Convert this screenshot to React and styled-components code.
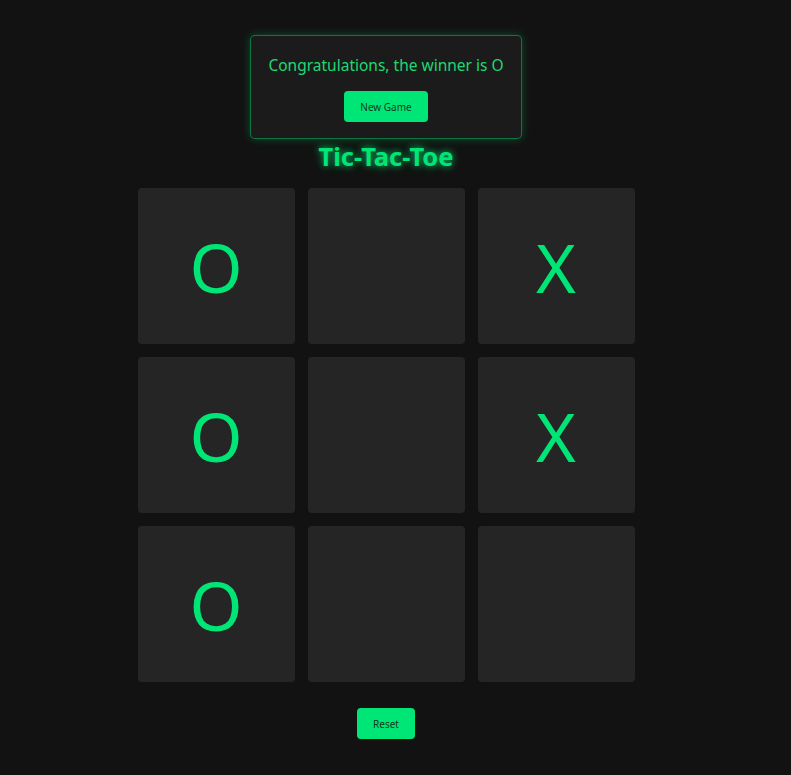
import React, { useState } from 'react';
import styled, { createGlobalStyle } from 'styled-components';

const GlobalStyle = createGlobalStyle`
    body {
        margin: 0;
        background: #121212;
        font-family: "Noto Sans", "Open Sans", sans-serif;
    }
`;

const Page = styled.div`
    min-height: 775px;
    padding: 35px 19px 0 0;
    box-sizing: border-box;

    display: flex;
    flex-direction: column;
    align-items: center;
`;

const Popup = styled.div`
    width: 272px;
    height: 104px;
    box-sizing: border-box;
    padding-top: 17px;

    background: #1b1b1b;
    border: 1px solid rgba(0, 230, 118, 0.45);
    border-radius: 5px;
    box-shadow: 0 0 8px rgba(0, 230, 118, 0.3);

    display: flex;
    flex-direction: column;
    align-items: center;
`;

const Message = styled.div`
    color: #1fd873;
    font-size: 15.5px;
    line-height: 24px;
`;

const Button = styled.button`
    width: ${props => props.w}px;
    height: 31px;
    margin-top: ${props => props.mt}px;

    background: #00e676;
    border: none;
    border-radius: 4px;

    color: #0f3a22;
    font-family: "Noto Sans", sans-serif;
    font-size: 10px;
    cursor: pointer;
`;

const Title = styled.h1`
    margin: 2px 0 17px;
    height: 30px;
    line-height: 30px;

    color: #00e676;
    font-size: 25.5px;
    font-weight: 700;
    text-shadow: 0 0 6px rgba(0, 230, 118, 0.7), 0 0 12px rgba(0, 230, 118, 0.4);
`;

const Board = styled.div`
    display: grid;
    grid-template-columns: repeat(3, 157px);
    grid-template-rows: repeat(3, 156px);
    gap: 13px;
`;

const Cell = styled.div`
    background: #252525;
    border-radius: 4px;

    display: flex;
    justify-content: center;
    align-items: center;

    color: #00e676;
    font-size: 68px;
    font-weight: 400;
`;

const App = () => {
    const [cells] = useState(['O', '', 'X', 'O', '', 'X', 'O', '', '']);

    return (
        <>
            <GlobalStyle />
            <Page>
                <Popup>
                    <Message>Congratulations, the winner is O</Message>
                    <Button w={84} mt={14}>New Game</Button>
                </Popup>
                <Title>Tic-Tac-Toe</Title>
                <Board>
                    {cells.map((c, i) => (
                        <Cell key={i}>{c}</Cell>
                    ))}
                </Board>
                <Button w={58} mt={26}>Reset</Button>
            </Page>
        </>
    );
};

export default App;
